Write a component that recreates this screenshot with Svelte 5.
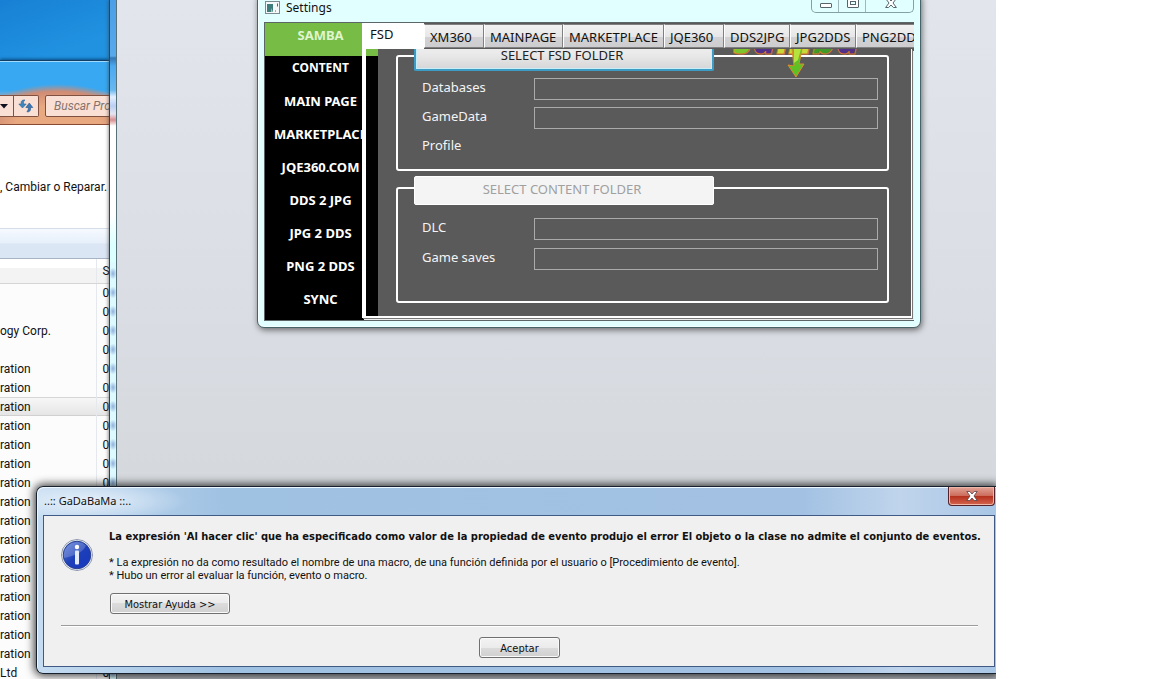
<script>
  const publishers = ['', '', 'ogy Corp.', '', ...Array(16).fill('ration'), 'Ltd'];
  const selectedRow = 6;

  const menu = ['CONTENT', 'MAIN PAGE', 'MARKETPLACE', 'JQE360.COM', 'DDS 2 JPG', 'JPG 2 DDS', 'PNG 2 DDS', 'SYNC'];

  const tabs = [
    { name: 'FSD', width: 62 },
    { name: 'XM360', width: 60 },
    { name: 'MAINPAGE', width: 79 },
    { name: 'MARKETPLACE', width: 101 },
    { name: 'JQE360', width: 60 },
    { name: 'DDS2JPG', width: 66 },
    { name: 'JPG2DDS', width: 66 },
    { name: 'PNG2DDS', width: 66 }
  ];
  let active = $state('FSD');
</script>

<main class="desktop">
  <section class="explorer" aria-label="Programas">
    <div class="glass">
      <div class="address">
        <button aria-label="Anteriores">
          <svg width="8" height="5" viewBox="0 0 8 5"><path d="M0 0h8L4 4.5z" fill="#101020" /></svg>
        </button>
        <button class="refresh" aria-label="Actualizar">
          <svg width="16" height="14" viewBox="0 0 16 14">
            <path d="M5.5 1C3 1.500 3 3 3.200 5H.8l3.700 4 3.700-4H5.600C5.400 3 5.500 2 7 1z" fill="#3f86bd" stroke="#28659a" stroke-width=".6" />
            <path d="M10 13c2.500-.5 2.800-2.500 2.500-4.500h2.300L11.300 4 7.800 8.500h2.400c.2 2 0 3-1.400 4z" fill="#3b78b4" stroke="#28558a" stroke-width=".6" />
          </svg>
        </button>
      </div>
      <input class="search" aria-label="Buscar" placeholder="Buscar Programas" />
    </div>
    <p class="hint">, Cambiar o Reparar.</p>
    <div class="toolbar"></div>
    <table>
      <thead><tr><th></th><th class="size">S</th></tr></thead>
      <tbody>
        {#each publishers as publisher, i}
          <tr class:selected={i === selectedRow}><td>{publisher}</td><td class="size">0</td></tr>
        {/each}
      </tbody>
    </table>
  </section>

  <section class="backdrop" aria-label="Access"></section>

  <section class="settings" aria-label="Settings">
    <header>
      <svg class="appicon" width="15" height="14" viewBox="0 0 15 14">
        <rect x=".5" y=".5" width="14" height="12" fill="#f4f8f8" stroke="#7b8b90" />
        <rect x="2" y="3" width="6" height="8" fill="#3f7d7c" />
        <path d="M6 11V7l2 4z" fill="#9cc3b0" />
        <path d="M10 10h1M12.500 2.500v3" stroke="#4e6a6e" />
      </svg>
      <h1>Settings</h1>
      <div class="caption">
        <button aria-label="Minimizar"><svg width="12" height="5" viewBox="0 0 12 5"><rect x=".5" y=".5" width="11" height="4" rx=".5" fill="#fff" stroke="#56656c" /></svg></button>
        <button aria-label="Maximizar"><svg width="12" height="10" viewBox="0 0 12 10"><rect x=".5" y=".5" width="11" height="9" rx=".5" fill="#fff" stroke="#56656c" /><rect x="3.500" y="3.500" width="5" height="3" fill="#e6ffff" stroke="#56656c" /></svg></button>
        <button class="wide" aria-label="Cerrar"><svg width="12" height="10" viewBox="0 0 12 10"><path d="M.6.5h3L6 3 8.400.5h3L8 5l3.400 4.500h-3L6 7 3.600 9.500h-3L4 5z" fill="#fff" stroke="#56656c" /></svg></button>
      </div>
    </header>
    <div class="body">
      <nav>
        <a class="current" href="#samba">SAMBA</a>
        {#each menu as item}
          <a href="#{item}">{item}</a>
        {/each}
      </nav>
      <div class="tabs">
        <div class="tablist" role="tablist">
          {#each tabs as tab}
            <button role="tab" aria-selected={active === tab.name} style:width="{tab.width}px" onclick={() => (active = tab.name)}>{tab.name}</button>
          {/each}
        </div>
        <div class="panel">
          <svg class="logo" width="126" height="30" viewBox="0 0 126 30" aria-label="samba">
            <text x="1" y="5" font-family="Open Sans, sans-serif" font-size="39" font-weight="800" font-style="italic" stroke="#d8742c" stroke-width="1"><tspan fill="#7cc52c">s</tspan><tspan fill="#503088">a</tspan><tspan fill="#c8d838">m</tspan><tspan fill="#3f9a28">b</tspan><tspan fill="#503088">a</tspan></text>
            <path d="M60 0h10l-3 15h5l-8 13-8-12 6 1z" fill="#5fc024" stroke="#e08a2c" />
            <path d="M62 0h7l-3 11-4 3z" fill="#b5e23c" />
          </svg>
          <div class="group first">
            <button class="pick">SELECT FSD FOLDER</button>
            <div class="fields">
              <label for="databases">Databases</label><input id="databases" />
              <label for="gamedata">GameData</label><input id="gamedata" />
              <span>Profile</span>
            </div>
          </div>
          <div class="group second">
            <button class="pick" disabled>SELECT CONTENT FOLDER</button>
            <div class="fields">
              <label for="dlc">DLC</label><input id="dlc" />
              <label for="saves">Game saves</label><input id="saves" />
            </div>
          </div>
        </div>
      </div>
    </div>
  </section>

  <section class="dialog" role="alertdialog" aria-labelledby="dlg-title">
    <header>
      <h2 id="dlg-title">..:: GaDaBaMa ::..</h2>
      <button class="close" aria-label="Cerrar">
        <svg width="12" height="10" viewBox="0 0 12 10"><path d="M.8.500h3L6 3 8.200.500h3L8 5l3.200 4.500h-3L6 7 3.800 9.500h-3L4 5z" fill="#fff" stroke="#5a4048" stroke-width=".8" /></svg>
      </button>
    </header>
    <div class="content">
      <div class="message">
        <svg width="32" height="32" viewBox="0 0 32 32">
          <defs>
            <linearGradient id="orb" x1="0" y1="0" x2="1" y2="1">
              <stop offset="0" stop-color="#5c7fd8" /><stop offset=".5" stop-color="#1d3fb8" /><stop offset="1" stop-color="#1638c0" />
            </linearGradient>
          </defs>
          <circle cx="16" cy="16" r="15.500" fill="#f4f6fa" stroke="#8c97ab" />
          <circle cx="16" cy="16" r="13.800" fill="url(#orb)" stroke="#273f8f" />
          <path d="M3 19A13.300 13.300 0 0 1 25 6.500Q22 15 3 19z" fill="#fff" opacity=".2" />
          <circle cx="16" cy="8" r="2.200" fill="#fff" />
          <rect x="14" y="11.500" width="4" height="14" rx="1" fill="#e4ebf8" />
        </svg>
        <div class="text">
          <strong>La expresión 'Al hacer clic' que ha especificado como valor de la propiedad de evento produjo el error El objeto o la clase no admite el conjunto de eventos.</strong>
          <p>* La expresión no da como resultado el nombre de una macro, de una función definida por el usuario o [Procedimiento de evento].<br />* Hubo un error al evaluar la función, evento o macro.</p>
          <button class="push help">Mostrar Ayuda &gt;&gt;</button>
        </div>
      </div>
      <div class="actions"><button class="push">Aceptar</button></div>
    </div>
  </section>
</main>

<style>
  :global(body) { margin: 0; background: #fff; }
  * { box-sizing: border-box; }
  h1, h2, p { margin: 0; font-weight: 400; }
  button, input { font: inherit; margin: 0; }
  svg { display: block; flex: none; }

  .desktop {
    position: relative;
    height: 100vh;
    margin-right: 156px;
    overflow: hidden;
    background: linear-gradient(160deg, #1880d4, #2092e0 70px);
    font: 12px/16px "Noto Sans", sans-serif;
    color: #111;
  }

  /* Programs window */
  .explorer {
    position: absolute;
    inset: 60px auto 0 0;
    width: 109px;
    overflow: hidden;
    border-top: 1px solid #123f68;
    background: #fff;
    box-shadow: 0 -1px 3px #0a4a80;
    font-family: Roboto, sans-serif;
  }
  .glass {
    display: flex;
    gap: 6px;
    height: 64px;
    padding-top: 33px;
    border-top: 1px solid #9fdcff;
    border-bottom: 1px solid #8a4a32;
    background:
      radial-gradient(ellipse 84px 42px at 58px 64px, #e8a880 50%, #d08c74 82%, #d08c7400 100%),
      linear-gradient(#38a8f2 28px, #b0a8b0 38px, #e8a880);
  }
  .address { display: flex; height: 22px; }
  .address button {
    display: grid;
    place-items: center;
    width: 14px;
    padding: 0 6px 0 0;
    border: 1px solid #805040;
    border-left: 0;
    background: #fadfd4;
  }
  .address .refresh { width: 25px; padding: 0; border-radius: 0 2px 2px 0; }
  .search {
    flex: none;
    width: 160px;
    height: 22px;
    padding: 0 8px;
    border: 1px solid #805040;
    border-radius: 2px;
    background: #fadfd4;
    font-style: italic;
  }
  .search::placeholder { color: #86736c; opacity: 1; }
  .hint { height: 103px; padding-top: 54px; white-space: nowrap; }
  .toolbar {
    height: 31px;
    border-top: 1px solid #d4dde8;
    border-bottom: 1px solid #a8b4c4;
    background: linear-gradient(#f6faff, #e6effa 14px, #dbe6f4 15px);
  }
  table { width: 109px; border-collapse: collapse; table-layout: fixed; background: #fcfcfc; }
  th { height: 24px; padding: 0; font-weight: 400; text-align: left; border-bottom: 1px solid #d5d5d5; background: linear-gradient(#fff 9px, #f3f3f4 9px); }
  td { height: 19px; padding: 1px 0 0; line-height: 17px; }
  .size { width: 13px; padding-left: 6px; border-left: 1px solid #e5e8ec; }
  .selected td { background: linear-gradient(#f8f8f8, #e4e4e4); box-shadow: inset 0 1px #d6d6d6, inset 0 -1px #d0d0d0; }

  /* Large empty window behind the dialogs */
  .backdrop {
    position: absolute;
    inset: 0 0 0 109px;
    border-left: 1px solid #29465a;
    background:
      linear-gradient(#587078, #587078) 6px 0 / 1px 100% no-repeat,
      linear-gradient(#e2e6ec, #d9dce2 340px, #d5d9dd 480px, #b0b5ba) 7px 0 / 100% 100% no-repeat,
      radial-gradient(ellipse 4px 6px, #8fb0dc, #d5f4fc00) 0 264px / 6px 19px repeat-y,
      #dcfaff;
    box-shadow: -1px 0 3px #4448;
  }
  .backdrop::before {
    content: "";
    display: block;
    width: 6px;
    height: 262px;
    background: linear-gradient(#4c9fe6, #58a8ec 56px, #3476b4 58px, #4ba8f0 66px, #68b8f0 90px, #e4f0ff 97px, #b9cff4 106px, #e8e4f0 114px, #d88f90 120px, #fff 126px, #fff 215px, #dcffff 245px);
  }

  /* Settings window */
  .settings {
    position: absolute;
    top: -8px;
    left: 257px;
    width: 664px;
    padding: 0 6px 6px;
    border: 1px solid #47646a;
    border-radius: 7px;
    background: #e2ffff;
    box-shadow: 1px 2px 6px #0008, inset 0 0 0 1px #f4ffff;
  }
  .settings header { display: flex; align-items: flex-start; gap: 6px; height: 29px; padding-left: 1px; }
  .appicon { margin-top: 8px; }
  .settings h1 { flex: 1; padding-top: 7px; font-size: 12px; }
  .caption { display: flex; height: 20px; border: 1px solid #84a0a6; border-top: 0; border-radius: 0 0 5px 5px; }
  .caption button { display: flex; justify-content: center; align-items: flex-end; width: 27px; padding: 0 0 4px 2px; border: 0; border-right: 1px solid #a0b8bc; background: none; }
  .caption .wide { width: 47px; border-right: 0; }
  .body { display: grid; grid-template-columns: 97px 16px 1fr; height: 299px; border: 1px solid #5c6668; border-width: 1px 0 1px 1px; background: #5a5a5a; font-size: 13px; }
  nav { grid-area: 1 / 1 / 2 / 3; display: flex; flex-direction: column; background: #000; }
  nav a { height: 33px; padding: 4px 2px 0 0; color: #fff; font-weight: 700; text-align: center; text-decoration: none; }
  nav .current { flex: none; background: #76bc45; color: #dff5d0; }
  nav a:nth-child(2) { font-size: 12px; }
  .tabs { grid-area: 1 / 2 / 2 / 4; display: flex; flex-direction: column; min-width: 0; z-index: 1; }
  .tablist { display: flex; height: 26px; overflow: hidden; align-items: flex-start; background: #5a5a5a; }
  .tablist button {
    flex: none;
    height: 24px;
    margin-top: 1px;
    padding: 1px 0 0 5px;
    border: 1px solid #808080;
    border-left-color: #fff;
    background: linear-gradient(#f2f2f2, #e6e6e8 12px, #d2d2d4 12px, #cdcdd0);
    color: #111;
    text-align: left;
    white-space: nowrap;
  }
  .tablist button[aria-selected="true"] { height: 26px; margin-top: 0; padding: 0 0 4px 8px; border: 0; background: #fff; }
  .panel {
    position: relative;
    flex: 1;
    display: flex;
    flex-direction: column;
    gap: 16px;
    margin: 0 2px 2px 0;
    padding: 6px 22px 0 30px;
    overflow: hidden;
    border: 1px solid #fff;
    border-width: 0 1px 2px 4px;
    background: linear-gradient(#76bc45 7px, #000 7px) 0 0 / 12px 100% no-repeat #5a5a5a;
    box-shadow: 1px 1px #777, 2px 2px #eee;
  }
  .logo { position: absolute; top: 0; right: 53px; }
  .group { height: 116px; border: 2px solid #fff; border-radius: 3px; color: #f4f4f4; }
  .pick {
    position: relative;
    display: block;
    width: 300px;
    height: 29px;
    margin: -13px 0 0 16px;
    padding: 0 4px 3px 0;
    border: 1px solid #fff;
    border-radius: 2px;
    background: linear-gradient(#f2f2f2, #e8e8e8 50%, #d6d6d8);
    color: #222;
  }
  .pick:disabled { background: #f4f4f4; color: #a0a0a0; }
  .first .pick { margin-top: -15px; padding: 0 4px 1px 0; border: 2px solid #3c9cc4; border-top: 0; box-shadow: inset 0 0 0 1px #c8eefa; }
  .fields { display: grid; grid-template-columns: 112px 1fr; gap: 7px 0; align-items: center; padding: 7px 9px 0 24px; }
  .second .fields { padding-top: 13px; row-gap: 8px; }
  .fields label, .fields span { height: 22px; line-height: 18px; }
  .fields input { width: 100%; height: 22px; padding: 0 4px; border: 1px solid #aaa; background: transparent; color: #fff; }

  /* Error dialog */
  .dialog {
    position: absolute;
    top: 486px;
    left: 36px;
    right: 0;
    padding: 0 0 6px 6px;
    border: 1px solid #17222e;
    border-right: 0;
    border-radius: 7px 0 0 7px;
    background:
      radial-gradient(ellipse 100px 20px at 50px 14px, #e6f0fa, #e6f0fa00),
      linear-gradient(90deg, #c5dcf1, #9fc1e2 20%, #a3c2e3 80%, #c0d4ec 90%, #a9c6e6);
    box-shadow: 0 0 9px 2px #000b, inset 1px 1px #eef7ff;
    font: 11px/13px "DejaVu Sans Condensed", "Noto Sans", sans-serif;
  }
  .dialog header { display: flex; justify-content: space-between; height: 28px; }
  .dialog h2 { padding: 6px 0 0 1px; font: 11px/16px "Noto Sans", sans-serif; }
  .close { display: grid; place-items: center; width: 47px; height: 19px; margin-right: 1px; padding: 0; border: 1px solid #54222a; border-top: 0; border-radius: 0 0 4px 4px; background: linear-gradient(#e3a598, #cc6a5a 9px, #b42f1c 9px, #d4664e); box-shadow: inset 0 0 0 1px #f0b8a8; }
  .content { height: 152px; margin-right: 1px; padding: 0 16px 0 17px; border: 1px solid #3f5a84; background: #f0f0f0; }
  .message { display: flex; gap: 16px; height: 110px; padding-top: 14px; border-bottom: 1px solid #9c9c9c; box-shadow: 0 1px #fff; }
  .message svg { margin-top: 9px; }
  .text strong { display: block; white-space: nowrap; }
  .text p { margin: 13px 0 11px; font-family: Roboto, sans-serif; white-space: nowrap; }
  .push { min-width: 81px; height: 21px; padding: 1px 4px 0; border: 1px solid #707070; border-radius: 3px; background: linear-gradient(#f3f3f3, #ebebeb 50%, #dcdcdc 50%, #d0d0d0); box-shadow: inset 0 0 0 1px #fafafa; color: #111; }
  .help { width: 120px; margin-left: 1px; }
  .actions { display: flex; justify-content: center; padding-top: 11px; }
</style>
